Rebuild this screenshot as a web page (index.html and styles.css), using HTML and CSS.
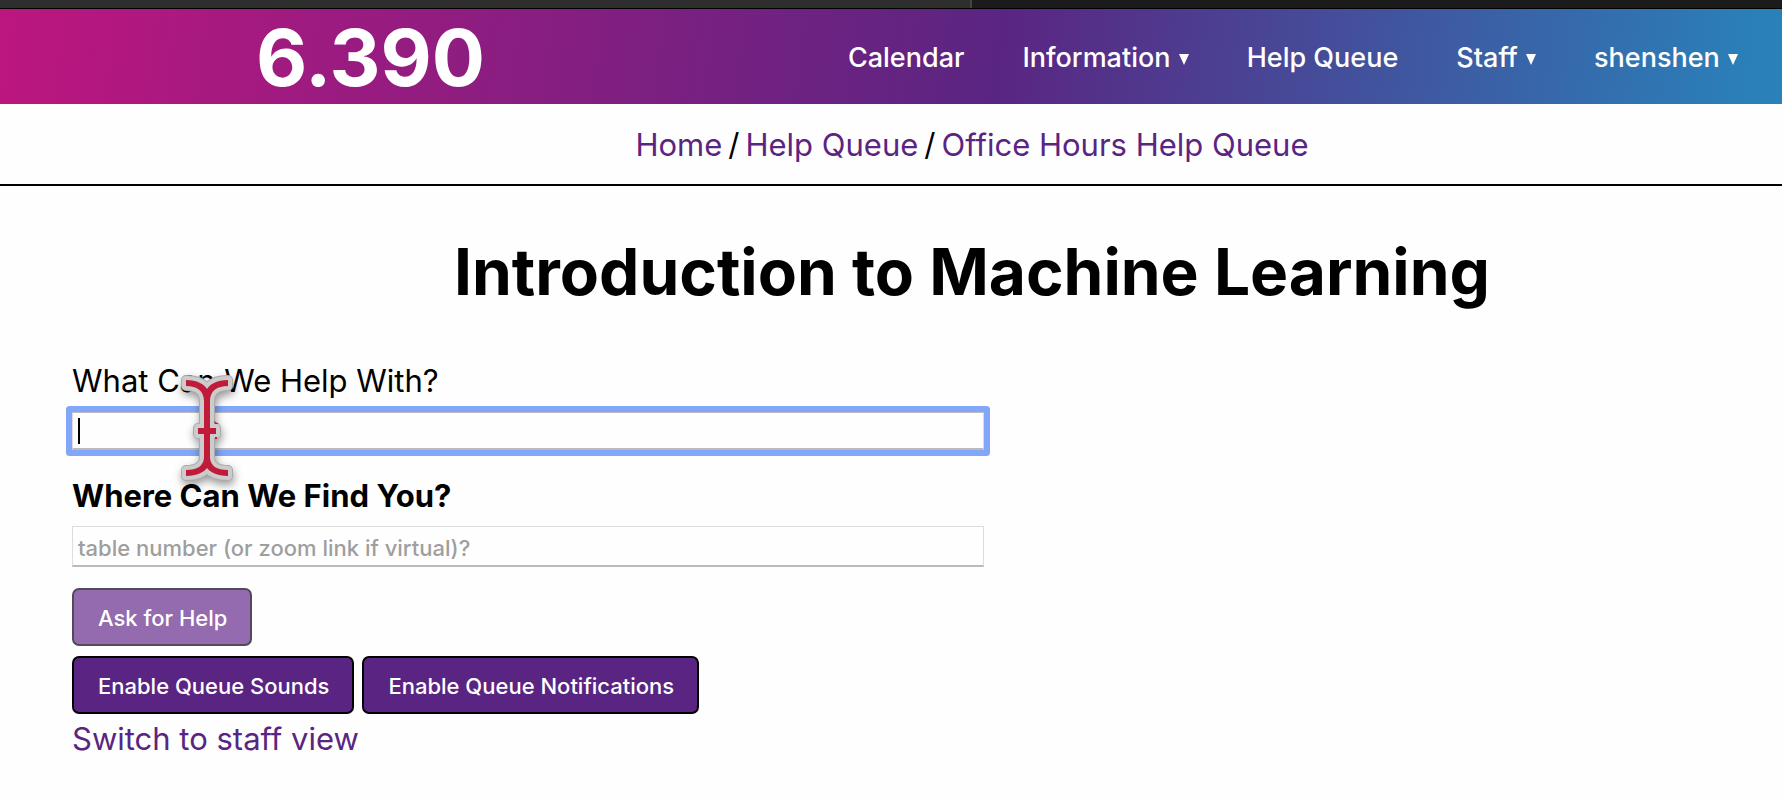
FILE: index.html
```html
<!DOCTYPE html>
<html lang="en">
<head>
<meta charset="utf-8">
<title>6.390 Help Queue</title>
<link rel="stylesheet" href="styles.css">
</head>
<body>
<div class="tabstrip"><div class="tab"></div></div>
<header class="topbar">
  <a class="brand" href="#">6.390</a>
  <nav class="menu">
    <a href="#">Calendar</a>
    <button type="button">Information <svg class="arrow" viewBox="0 0 10 11"><path d="M0 0H10L5 11Z"/></svg></button>
    <a href="#">Help Queue</a>
    <button type="button">Staff <svg class="arrow" viewBox="0 0 10 11"><path d="M0 0H10L5 11Z"/></svg></button>
    <button type="button">shenshen <svg class="arrow" viewBox="0 0 10 11"><path d="M0 0H10L5 11Z"/></svg></button>
  </nav>
</header>
<nav class="crumbs"><a href="#">Home</a><span>/</span><a href="#">Help Queue</a><span>/</span><a href="#">Office Hours Help Queue</a></nav>
<main class="content">
  <h1>Introduction to Machine Learning</h1>
  <form class="help-form">
    <label class="question" for="topic">What Can We Help With?</label>
    <div class="field">
      <input class="textbox focused" id="topic" type="text">
      <span class="caret"></span>
      <svg class="pointer" viewBox="0 0 60 112">
        <defs><path id="ibeam" d="M9 7C20 7 27 11 30 16C33 11 40 7 51 7V13C40 13 33 18 33 28V55H39V61H33V84C33 93 40 97 51 97V103C40 103 33 99 30 95C27 99 20 103 9 103V97C20 97 27 93 27 84V61H21V55H27V28C27 18 20 13 9 13Z"/></defs>
        <use class="pointer-edge" href="#ibeam"/>
        <use class="pointer-rim" href="#ibeam"/>
        <use class="pointer-core" href="#ibeam"/>
        <path class="pointer-core" d="M37 48l5 3h-4zM38 64h2v2h-2z"/>
      </svg>
    </div>
    <label class="question strong" for="place">Where Can We Find You?</label>
    <input class="textbox" id="place" type="text" placeholder="table number (or zoom link if virtual)?">
    <div class="actions"><button class="btn" type="button" disabled>Ask for Help</button></div>
    <div class="actions">
      <button class="btn" type="button">Enable Queue Sounds</button>
      <button class="btn" type="button">Enable Queue Notifications</button>
    </div>
  </form>
  <a class="switch" href="#">Switch to staff view</a>
</main>
</body>
</html>
```

FILE: styles.css
```css
* { box-sizing: border-box; }
body {
  margin: 0;
  background: #fefefe;
  color: #000;
  font-family: Inter, "Liberation Sans", sans-serif;
  font-size: 31px;
  line-height: 40px;
  overflow: hidden;
}
a { color: #5a2582; text-decoration: none; }
.tabstrip { height: 9px; background: #1b1b1b; border-bottom: 1px solid #000; }
.tab { width: 972px; height: 8px; background: #2e2e2e; border-right: 2px solid #444; }
.topbar {
  display: flex;
  justify-content: space-between;
  align-items: center;
  height: 95px;
  padding: 2px 44px 0 256px;
  background: linear-gradient(98deg, #bd167f, #5a2582 56%, #2a80b9 98%);
}
.brand { color: #fff; font-size: 79px; font-weight: 700; line-height: 93px; }
.menu { display: flex; align-items: center; gap: 58px; }
.menu a, .menu button {
  padding: 0;
  border: 0;
  background: none;
  color: #fff;
  font-family: inherit;
  font-size: 27px;
  font-weight: 500;
  line-height: 40px;
}
.arrow { width: 10px; height: 11px; margin-left: 1px; vertical-align: 2px; fill: #fff; }
.crumbs {
  display: flex;
  justify-content: center;
  gap: 6px;
  padding: 21px 0 19px 162px;
  border-bottom: 2px solid #000;
}
.content { padding: 46px 0 0 72px; }
h1 {
  margin: 0 0 47px;
  padding-left: 90px;
  font-size: 64px;
  font-weight: 700;
  line-height: 80px;
  text-align: center;
}
.help-form { display: flex; flex-direction: column; align-items: flex-start; width: 912px; max-width: 100%; }
.question { margin-top: 2px; }
.strong { margin-top: 26px; font-weight: 700; }
.field { position: relative; width: 100%; margin-top: 11px; }
.textbox {
  display: block;
  width: 100%;
  height: 41px;
  padding: 4px 5px 0;
  border: 1px solid #ddd;
  border-bottom: 2px solid #bbb;
  background: #fefefe;
  font-family: inherit;
  font-size: 22px;
  font-weight: 500;
}
.textbox::placeholder { color: #9e9e9e; opacity: 1; }
.focused { height: 38px; outline: none; border-top-color: #bbb; box-shadow: 0 0 0 6px #82a7f8; border-radius: 1px; }
.strong + .textbox { margin-top: 10px; }
.caret { position: absolute; left: 6px; top: 6px; width: 2px; height: 26px; background: #000; }
.pointer { position: absolute; left: 105px; top: -39px; width: 60px; height: 112px; overflow: visible; filter: drop-shadow(1px 4px 4px #0006); }
.pointer-edge { fill: #aaa; stroke: #aaa; stroke-width: 10; stroke-linejoin: round; }
.pointer-rim { fill: #ccc; stroke: #ccc; stroke-width: 8; stroke-linejoin: round; }
.pointer-core { fill: #c01c3a; }
.actions { display: flex; gap: 8px; margin-top: 10px; }
.textbox + .actions { margin-top: 21px; }
.btn {
  height: 58px;
  padding: 2px 23px 0 24px;
  border: 2px solid #000;
  border-radius: 7px;
  background: #5a2582;
  color: #fff;
  font-family: inherit;
  font-size: 22px;
  font-weight: 500;
}
.btn:disabled { border-color: #524b57; background: #936bae; }
.switch { display: inline-block; margin-top: 5px; }
```
